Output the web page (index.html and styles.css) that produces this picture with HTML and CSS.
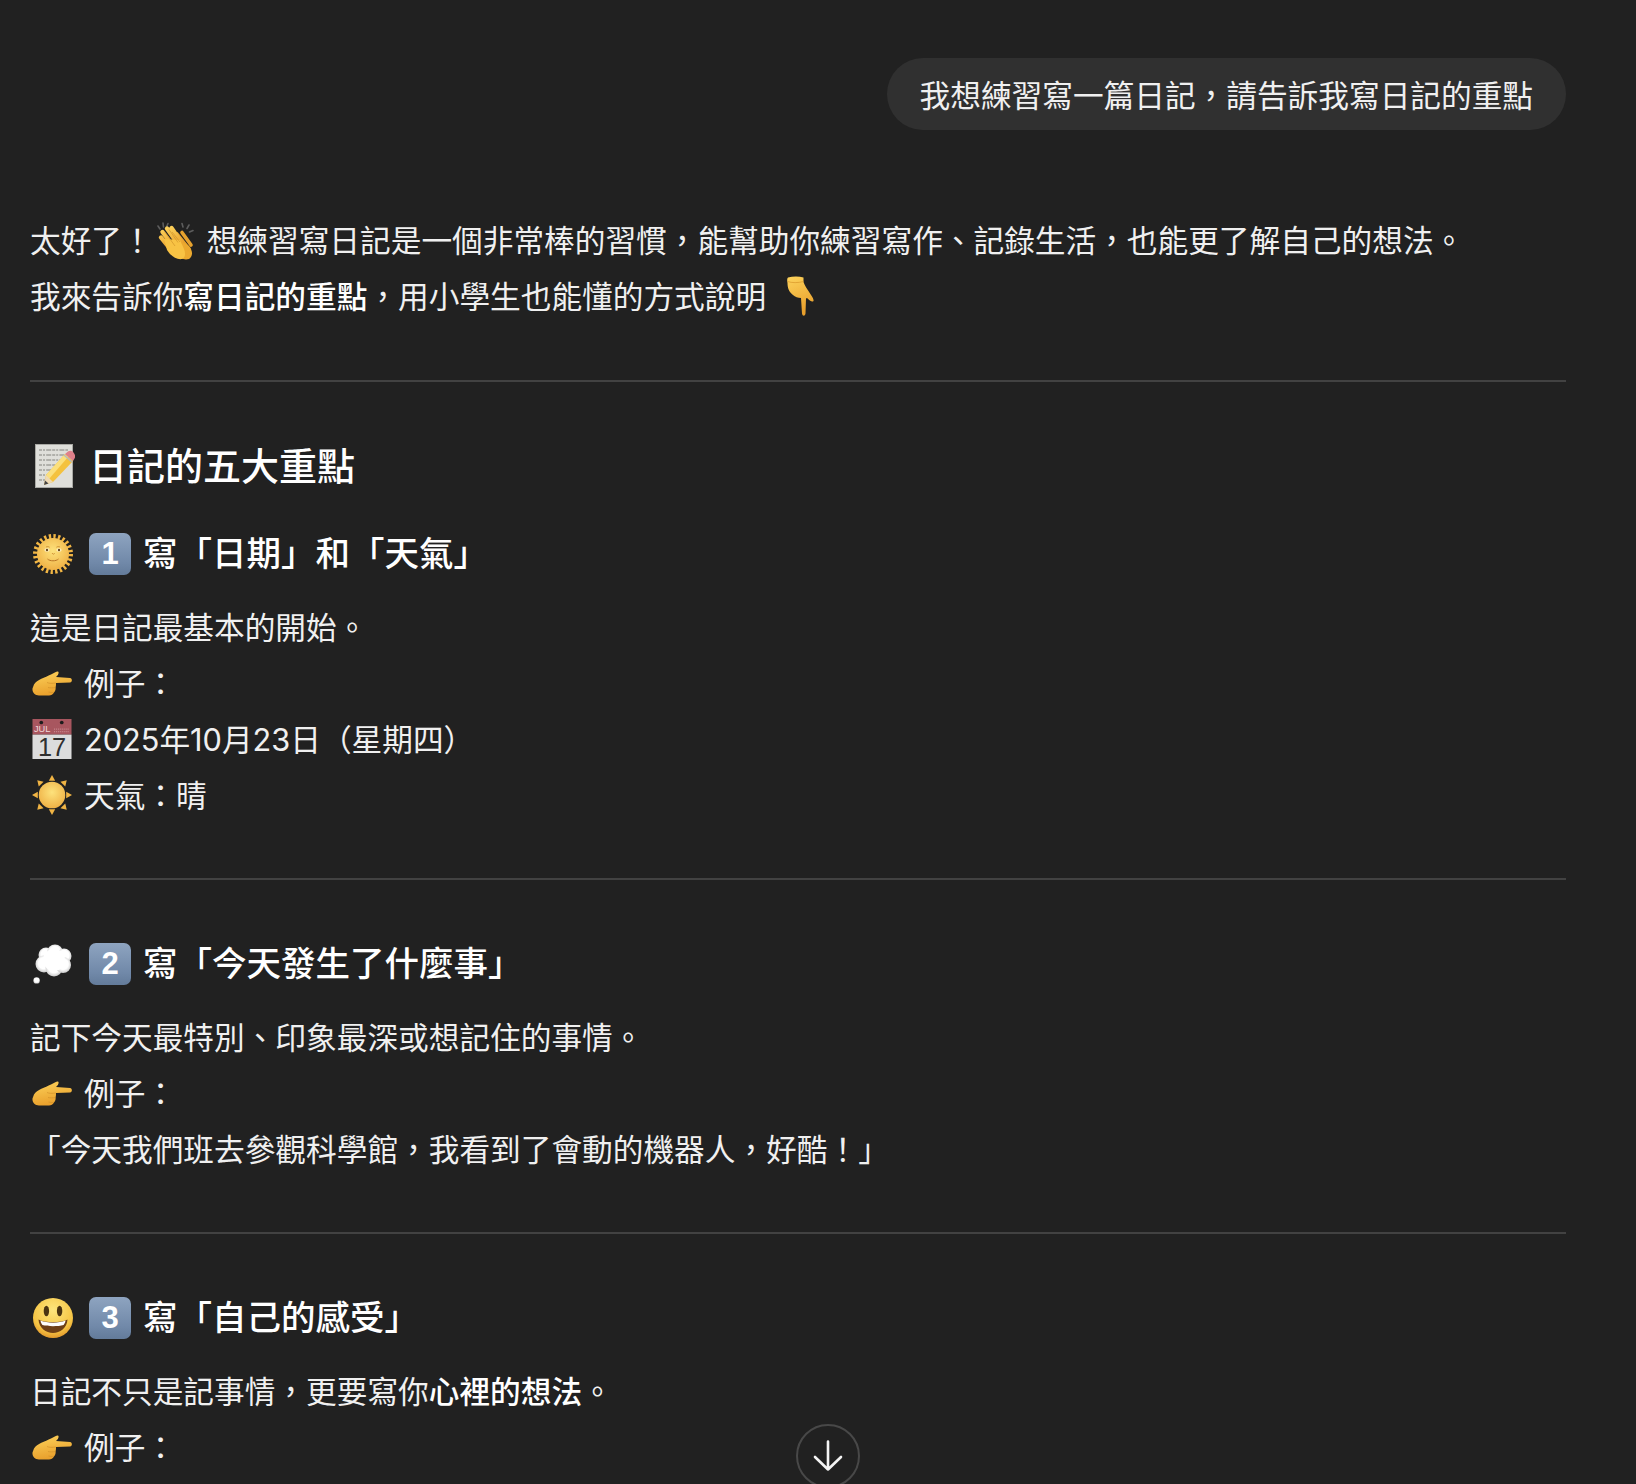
FILE: index.html
```html
<!DOCTYPE html>
<html lang="zh-Hant">
<head>
  <meta charset="UTF-8">
  <meta name="viewport" content="width=device-width, initial-scale=1.0">
  <title>寫日記的重點</title>
  <link rel="stylesheet" href="styles.css">
</head>
<body>
  <!-- emoji drawn as symbols, no colour emoji font in the sandbox -->
  <svg class="sprites" xmlns="http://www.w3.org/2000/svg">
    <defs>
      <linearGradient id="skin" x1="0" y1="0" x2="0.3" y2="1">
        <stop offset="0" stop-color="#fdd35c"/>
        <stop offset="1" stop-color="#e9a02c"/>
      </linearGradient>
      <radialGradient id="sunface" cx="0.5" cy="0.4" r="0.65">
        <stop offset="0" stop-color="#fde27c"/>
        <stop offset="1" stop-color="#eeae42"/>
      </radialGradient>
      <radialGradient id="smile" cx="0.5" cy="0.3" r="0.75">
        <stop offset="0" stop-color="#fde57d"/>
        <stop offset="0.7" stop-color="#f6c544"/>
        <stop offset="1" stop-color="#dd8d26"/>
      </radialGradient>
      <radialGradient id="puff" cx="0.5" cy="0.45" r="0.55">
        <stop offset="0.6" stop-color="#ffffff"/>
        <stop offset="1" stop-color="#c9c9c9"/>
      </radialGradient>
    </defs>

    <symbol id="clap" viewBox="0 0 38 38">
      <g stroke="#5d5d5d" stroke-width="1.6" stroke-linecap="round">
        <path d="M2 4 L4 7M7 1 L7.5 5M12 1.5 L10.5 5"/>
        <path d="M26 1.5 L27 5M33 3 L31 6.5M37 8.5 L33.5 10"/>
      </g>
      <g fill="none" stroke="#e7a22e" stroke-width="3.6" stroke-linecap="round">
        <path d="M21 12 L33 27M26 10.5 L35 23"/>
      </g>
      <path d="M20 16 L33 24 C37 29 37 34 33 37 C28 38.5 23 36 20 32 Z" fill="#eba92f"/>
      <g fill="none" stroke="url(#skin)" stroke-width="4.4" stroke-linecap="round">
        <path d="M6.5 10 L18 25M11 6.5 L22 22M15.5 6 L25 20M5 15.5 L15 28"/>
      </g>
      <path d="M8 17 L24 18 L28 27 C30 32 29 36 26 37 C20 38 14 33 11 28 Z" fill="#f8c344"/>
      <g fill="none" stroke="#c98a24" stroke-width="0.7" opacity="0.8">
        <path d="M8.5 9.5 L19 24M13 7.5 L22 20.5M16 10 L24 20"/>
      </g>
    </symbol>

    <symbol id="point-down" viewBox="0 0 28 40">
      <path d="M2 1.5 C7 0 13 0 17.5 1.5 L17.5 6 C18.5 9 21 13 25 19 C27 22 28.5 25 27 25.5 C25.5 26 23 24 21 22 L20 22.5 L19.5 37.5 C19 40.5 16.5 40.5 16 37.5 L15 22 C12 22 9 21 7 19 C3 16 1.5 12 1.5 7 C1 4 1 2.5 2 1.5 Z" fill="url(#skin)"/>
      <path d="M1.5 5.5 C6 7 12 7 17.5 5.5" fill="none" stroke="#d9962a" stroke-width="0.7"/>
    </symbol>

    <symbol id="point-right" viewBox="0 0 40 40">
      <g transform="translate(0 7.5)">
        <path d="M2 14 C5 9 13 7 19 4 C22 2.5 25 0.5 26 1 C27.5 2 26 5 24 6.5 L38 7.5 C40.5 8 40.5 11.5 38 12 L24 12.5 C24 14 24 16 23.5 17 C24 19 23 21 22 22 C21 24 19 25 17 25 L7 25 C3 25 0 22 0.5 18 Z" fill="url(#skin)"/>
        <path d="M24 12.5 C20 13 17 13 15 12M23.5 17 C21 17.5 18 17.5 16 17M22 22 C20 22 18 22 16.5 21.5" fill="none" stroke="#d2902a" stroke-width="0.7"/>
      </g>
    </symbol>

    <symbol id="memo" viewBox="0 0 40 44">
      <rect x="0" y="0" width="38" height="44" fill="#dfdfda"/>
      <rect x="0.5" y="0.5" width="37" height="43" fill="none" stroke="#a9a9a4"/>
      <g fill="none" stroke="#6a6a66" stroke-width="0.8" stroke-dasharray="3 1 2 1.2 5 1">
        <path d="M4 6 H33M4 11 H33M4 16 H28M4 21 H23M4 26 H16M4 31 H13M4 36 H10"/>
      </g>
      <path d="M9 41 L11 31 L30 10 L38 17 L18 38 Z" fill="#f4c23e"/>
      <path d="M11 31 L30 10 L33 13 L14 35 Z" fill="#fbe07c"/>
      <path d="M9 41 L11 31 L18 38 Z" fill="#eed9b3"/>
      <path d="M9 41 L10 36.5 L13.5 39.5 Z" fill="#444"/>
      <path d="M30 10 L33 7.5 C35 6 37 6.5 38.5 8.5 C40.5 11 40.5 13 39.5 14.5 L38 17 Z" fill="#e0808a"/>
      <path d="M29 11 L37 18" stroke="#b9b9b9" stroke-width="1.6"/>
    </symbol>

    <symbol id="sun-face" viewBox="0 0 40 40">
      <circle cx="20" cy="20" r="17.6" fill="none" stroke="#f2b644" stroke-width="4.8" stroke-dasharray="2.3 2.3"/>
      <circle cx="20" cy="20" r="16" fill="url(#sunface)"/>
      <ellipse cx="14" cy="16" rx="2.6" ry="1.7" fill="#fff3c9"/>
      <ellipse cx="26" cy="16" rx="2.6" ry="1.7" fill="#fff3c9"/>
      <circle cx="14" cy="16" r="1.2" fill="#6b4a1c"/>
      <circle cx="26" cy="16" r="1.2" fill="#6b4a1c"/>
      <path d="M13 13 C14 12.4 15.6 12.5 16.6 13.2M23.4 13.2 C24.4 12.5 26 12.4 27 13" fill="none" stroke="#c7862c" stroke-width="0.8"/>
      <path d="M19 19 C20 20.5 21 20.5 21.6 19.4" fill="none" stroke="#cf8f33" stroke-width="1"/>
      <path d="M14.5 25 C17 27.4 23 27.4 25.5 25" fill="none" stroke="#b87425" stroke-width="1"/>
    </symbol>

    <symbol id="sun" viewBox="0 0 38 38">
      <g fill="#f0b444">
        <path d="M19 0 L22 5.5 H16 Z"/>
        <path d="M19 38 L22 32.5 H16 Z"/>
        <path d="M0 19 L5.5 16 V22 Z"/>
        <path d="M38 19 L32.5 16 V22 Z"/>
        <path d="M5 5 L11 6.4 L6.4 11 Z"/>
        <path d="M33 5 L27 6.4 L31.6 11 Z"/>
        <path d="M5 33 L11 31.6 L6.4 27 Z"/>
        <path d="M33 33 L27 31.6 L31.6 27 Z"/>
      </g>
      <circle cx="19" cy="19" r="12.6" fill="url(#sunface)"/>
    </symbol>

    <symbol id="thought" viewBox="0 0 40 40">
      <g fill="url(#puff)">
        <circle cx="13" cy="11" r="7.5"/>
        <circle cx="22" cy="8.5" r="8"/>
        <circle cx="31" cy="12" r="7.5"/>
        <circle cx="11" cy="20" r="8.5"/>
        <circle cx="21" cy="24" r="8.5"/>
        <circle cx="30" cy="21" r="8"/>
      </g>
      <circle cx="21" cy="16" r="11" fill="#fff"/>
      <circle cx="3.6" cy="36.4" r="3.2" fill="url(#puff)"/>
    </symbol>

    <symbol id="smiley" viewBox="0 0 40 40">
      <circle cx="20" cy="20" r="20" fill="url(#smile)"/>
      <ellipse cx="13.4" cy="13" rx="2.7" ry="5.2" fill="#4a3311"/>
      <ellipse cx="26.6" cy="13" rx="2.7" ry="5.2" fill="#4a3311"/>
      <path d="M5.5 21.5 C12 25 28 25 34.5 21.5 C34 30 27 35 20 35 C13 35 6 30 5.5 21.5 Z" fill="#6e3f16"/>
      <path d="M7.5 22.6 C14 25.4 26 25.4 32.5 22.6 C32.3 24.6 31.5 26 30.6 27 C25 28.6 15 28.6 9.4 27 C8.5 26 7.7 24.6 7.5 22.6 Z" fill="#fdfdfd"/>
    </symbol>
  </svg>

  <main class="chat">
    <div class="bubble">我想練習寫一篇日記&#xFF0C;請告訴我寫日記的重點</div>

    <div class="reply">
      <p>太好了&#xFF01;<svg class="emoji clap"><use href="#clap"/></svg>想練習寫日記是一個非常棒的習慣&#xFF0C;能幫助你練習寫作、記錄生活&#xFF0C;也能更了解自己的想法。</p>
      <p>我來告訴你<strong>寫日記的重點</strong>&#xFF0C;用小學生也能懂的方式說明<svg class="emoji down"><use href="#point-down"/></svg></p>

      <hr>

      <h2><svg class="emoji memo"><use href="#memo"/></svg>日記的五大重點</h2>

      <h3><svg class="emoji lead"><use href="#sun-face"/></svg><span class="keycap">1</span>寫「日期」和「天氣」</h3>
      <p>這是日記最基本的開始。</p>
      <p><svg class="emoji item"><use href="#point-right"/></svg>例子&#xFF1A;</p>
      <p><svg class="emoji item" viewBox="0 0 40 41">
        <rect width="40" height="16" fill="#a8565f"/>
        <rect y="16" width="40" height="25" fill="#dcdcdc"/>
        <circle cx="9" cy="3.6" r="1.9" fill="#1c1c1c"/>
        <circle cx="30" cy="3.6" r="1.9" fill="#1c1c1c"/>
        <text x="1.5" y="13.6" class="cal-month">JUL</text>
        <path d="M22 13 H38M22 10.4 H38" stroke="#c98a90" stroke-width="1.2" stroke-dasharray="1 1"/>
        <text x="20" y="37.5" text-anchor="middle" class="cal-day">17</text>
      </svg>2025年10月23日&#xFF08;星期四&#xFF09;</p>
      <p><svg class="emoji item"><use href="#sun"/></svg>天氣&#xFF1A;晴</p>

      <hr>

      <h3><svg class="emoji lead"><use href="#thought"/></svg><span class="keycap">2</span>寫「今天發生了什麼事」</h3>
      <p>記下今天最特別、印象最深或想記住的事情。</p>
      <p><svg class="emoji item"><use href="#point-right"/></svg>例子&#xFF1A;</p>
      <p>「今天我們班去參觀科學館&#xFF0C;我看到了會動的機器人&#xFF0C;好酷&#xFF01;」</p>

      <hr>

      <h3><svg class="emoji lead"><use href="#smiley"/></svg><span class="keycap">3</span>寫「自己的感受」</h3>
      <p>日記不只是記事情&#xFF0C;更要寫你<strong>心裡的想法</strong>。</p>
      <p><svg class="emoji item"><use href="#point-right"/></svg>例子&#xFF1A;</p>
    </div>
  </main>

  <button class="scroll-down" aria-label="Scroll to bottom">
    <svg viewBox="0 0 30 32" width="30" height="32">
      <path d="M15 1.5 V29.5 M2 17 L15 29.5 L28 17" fill="none" stroke="#f4f4f4" stroke-width="2.6" stroke-linecap="round" stroke-linejoin="round"/>
    </svg>
  </button>
</body>
</html>
```

FILE: styles.css
```css
html, body {
  margin: 0;
  height: 100%;
  overflow: hidden;
}
body {
  background: #212121;
  color: #f0f0f0;
  font-family: Inter, "Noto Sans CJK TC", sans-serif;
  font-size: 30.68px;
  line-height: 56px;
}
.sprites {
  position: absolute;
  width: 0;
  height: 0;
}
.chat {
  display: flex;
  flex-direction: column;
  padding: 58px 70px 0 30px;
}
.bubble {
  align-self: flex-end;
  background: #303030;
  border-radius: 36px;
  padding: 10px 33px 6px;
}
.reply {
  margin-top: 83.4px;
}
p {
  margin: 0;
}
strong {
  color: #fff;
  font-weight: 500;
}
hr {
  border: 0;
  border-top: 2px solid #424242;
  margin: 54.3px 0 56px;
}
h2 {
  margin: 0;
  color: #fff;
  font-size: 38px;
  font-weight: 500;
}
h3 {
  margin: 32px 0 18px;
  color: #fff;
  font-size: 34.5px;
  font-weight: 500;
}
hr + h3 {
  margin-top: 0;
}
.emoji {
  display: inline-block;
  overflow: visible;
  vertical-align: -8px;
}
.emoji.clap {
  width: 38px;
  height: 38px;
  margin: 0 13px 0 3px;
}
.emoji.down {
  width: 28px;
  height: 40px;
  margin-left: 20px;
}
.emoji.memo {
  width: 40px;
  height: 44px;
  margin: 0 14px 0 5px;
}
.emoji.lead {
  width: 40px;
  height: 40px;
  margin: 0 16px 0 3px;
}
.emoji.item {
  width: 40px;
  height: 40px;
  margin: 0 12px 0 2px;
}
.keycap {
  display: inline-block;
  overflow: hidden;
  width: 42px;
  height: 42px;
  margin-right: 12px;
  border-radius: 7px;
  background: linear-gradient(#8ea4c0, #7189a9 70%, #637b9a);
  color: #fff;
  font-family: "Liberation Sans", sans-serif;
  font-size: 31px;
  font-weight: 700;
  line-height: 42px;
  text-align: center;
  vertical-align: -9px;
}
.cal-month {
  fill: #f0d8da;
  font-family: "Liberation Sans", sans-serif;
  font-size: 9.5px;
}
.cal-day {
  fill: #2e2e2e;
  font-family: "Liberation Sans", sans-serif;
  font-size: 26px;
}
.scroll-down {
  position: absolute;
  left: 796px;
  top: 1424px;
  display: flex;
  align-items: center;
  justify-content: center;
  width: 64px;
  height: 64px;
  padding: 0;
  background: #212121;
  border: 2px solid #484848;
  border-radius: 50%;
}
```
